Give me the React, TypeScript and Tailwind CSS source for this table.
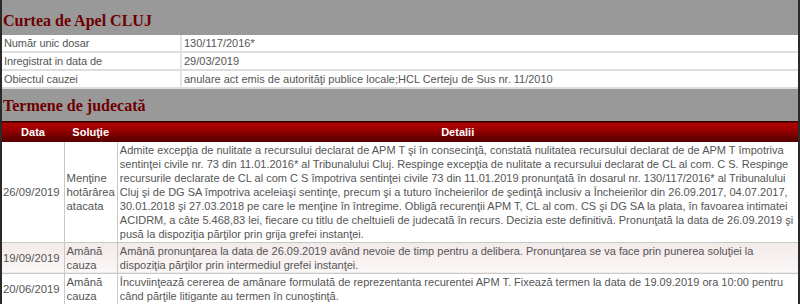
const info = [
  ['Număr unic dosar', '130/117/2016*'],
  ['Inregistrat in data de', '29/03/2019'],
  ['Obiectul cauzei', 'anulare act emis de autorităţi publice locale;HCL Certeju de Sus nr. 11/2010'],
];

const termene = [
  {
    data: '26/09/2019',
    solutie: ['Menţine', 'hotărârea', 'atacata'],
    detalii: [
      'Admite excepţia de nulitate a recursului declarat de APM T şi în consecinţă, constată nulitatea recursului declarat de de APM T împotriva',
      'sentinţei civile nr. 73 din 11.01.2016* al Tribunalului Cluj. Respinge excepţia de nulitate a recursului declarat de CL al com. C S. Respinge',
      'recursurile declarate de CL al com C S împotriva sentinţei civile 73 din 11.01.2019 pronunţată în dosarul nr. 130/117/2016* al Tribunalului',
      'Cluj şi de DG SA împotriva aceleiaşi sentinţe, precum şi a tuturo încheierilor de şedinţă inclusiv a Încheierilor din 26.09.2017, 04.07.2017,',
      '30.01.2018 şi 27.03.2018 pe care le menţine în întregime. Obligă recurenţii APM T, CL al com. CS şi DG SA la plata, în favoarea intimatei',
      'ACIDRM, a câte 5.468,83 lei, fiecare cu titlu de cheltuieli de judecată în recurs. Decizia este definitivă. Pronunţată la data de 26.09.2019 şi',
      'pusă la dispoziţia părţilor prin grija grefei instanţei.',
    ],
  },
  {
    data: '19/09/2019',
    solutie: ['Amână', 'cauza'],
    detalii: [
      'Amână pronunţarea la data de 26.09.2019 având nevoie de timp pentru a delibera. Pronunţarea se va face prin punerea soluţiei la',
      'dispoziţia părţilor prin intermediul grefei instanţei.',
    ],
    shaded: true,
  },
  {
    data: '20/06/2019',
    solutie: ['Amână', 'cauza'],
    detalii: [
      'Încuviinţează cererea de amânare formulată de reprezentanta recurentei APM T. Fixează termen la data de 19.09.2019 ora 10:00 pentru',
      'când părţile litigante au termen în cunoştinţă.',
    ],
  },
];

export default function App() {
  return (
    <div className="w-[800px] h-[304px] overflow-hidden bg-[#999999] border-l-2 border-r-2 border-[#2a2a2a] text-[#555555] font-['Liberation_Sans',Arial,sans-serif]">
      <h2 className="pt-[12px] pl-[1px] h-[35px] text-[16px] leading-[18px] font-bold text-[#6e0000] font-['Liberation_Serif',serif]">
        Curtea de Apel CLUJ
      </h2>

      <table className="w-full border-collapse bg-white text-[11px] leading-[16px]">
        <tbody>
          {info.map(([k, v]) => (
            <tr key={k} className="border-b-2 border-[#dddddd]">
              <td className="w-[179px] pl-[2px] h-[17px] border-r-2 border-[#e4e4e4] whitespace-nowrap tracking-[-0.1px]">{k}</td>
              <td className="pl-[2px] whitespace-nowrap">{v}</td>
            </tr>
          ))}
        </tbody>
      </table>

      <h2 className="pt-[8px] pl-[1px] h-[32px] text-[16px] leading-[18px] font-bold text-[#6e0000] font-['Liberation_Serif',serif]">
        Termene de judecată
      </h2>

      <table className="w-full border-collapse text-[11px] leading-[14px]">
        <thead>
          <tr className="h-[20px] text-white font-bold bg-[linear-gradient(#b30000_0%,#a00000_30%,#8a0000_50%,#6a0000_75%,#5a0000_100%)] border-t border-[#3a0000]">
            <th className="w-[62px] text-center font-bold">Data</th>
            <th className="w-[52px] text-center font-bold">Soluţie</th>
            <th className="text-center font-bold">Detalii</th>
          </tr>
        </thead>
        <tbody>
          {termene.map((t) => (
            <tr
              key={t.data}
              className={
                'border-b border-[#c8c8c8] ' +
                (t.shaded ? 'bg-[linear-gradient(#f3e9e9,#fbf7f7)]' : 'bg-white')
              }
            >
              <td className="px-[1px] align-middle whitespace-nowrap border-r border-[#c8c8c8] text-[11.3px]">{t.data}</td>
              <td className="px-[2px] align-middle whitespace-nowrap border-r border-[#c8c8c8] text-[11.3px]">
                {t.solutie.map((s) => (
                  <div key={s}>{s}</div>
                ))}
              </td>
              <td className="pl-[2px] pt-[1px] pb-[1px] align-top whitespace-nowrap">
                {t.detalii.map((l, i) => (
                  <div key={i}>{l}</div>
                ))}
              </td>
            </tr>
          ))}
        </tbody>
      </table>
    </div>
  );
}
